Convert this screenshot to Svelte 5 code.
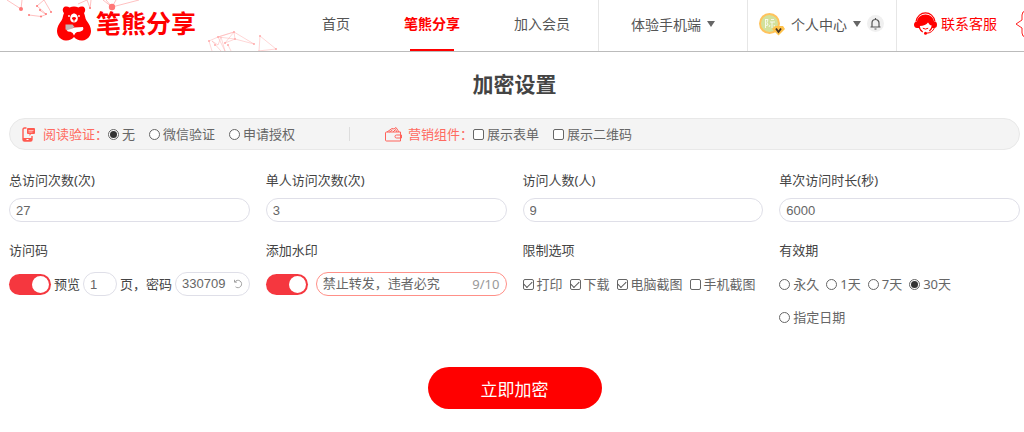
<script>
  let verify = $state('none');
  let widgets = $state({ form: false, qr: false });
  let preview = $state(true);
  let watermark = $state(true);
  let markText = $state('禁止转发，违者必究');
  let expiry = $state('30');

  const verifyOptions = [
    { value: 'none', label: '无' },
    { value: 'wechat', label: '微信验证' },
    { value: 'apply', label: '申请授权' }
  ];
  const expiryOptions = [
    { value: 'forever', label: '永久' },
    { value: '1', label: '1天' },
    { value: '7', label: '7天' },
    { value: '30', label: '30天' },
    { value: 'date', label: '指定日期', ownRow: true }
  ];
  let limits = $state([
    { label: '打印', on: true },
    { label: '下载', on: true },
    { label: '电脑截图', on: true },
    { label: '手机截图', on: false }
  ]);
  let counts = $state([
    { id: 'total', label: '总访问次数(次)', value: '27' },
    { id: 'single', label: '单人访问次数(次)', value: '3' },
    { id: 'people', label: '访问人数(人)', value: '9' },
    { id: 'duration', label: '单次访问时长(秒)', value: '6000' }
  ]);
</script>

<header>
  <svg class="net" width="280" height="51" viewBox="0 0 280 51" aria-hidden="true">
    <g fill="none" stroke="#ffa6a6" stroke-width=".7">
      <path d="M7 0 21 9 22 0M29 15l12 1.500 5-2-6-4M44 0l-7 6 9 8M44 0l7 12M78 4l9-4 3 8M103 0l9 7 27-7M106 0l6 7 4-7M91 0l-1 9" />
      <path stroke-opacity=".65" d="M209 41l9-4 16-5 20 12-19-5-10 4 9-11 1 7-17-2 7 14-4-14-3 8-6-4 9 10M209 41l3 10M228 45l3 6M234 32l-16 5M260 36l-1 15M260 36l16 13-18 2" />
    </g>
    <g fill="#ff7777">
      <circle cx="21" cy="9" r="2" /><circle cx="112" cy="7" r="3.200" />
      <circle cx="29" cy="15" r="1" /><circle cx="41" cy="16.500" r="1" /><circle cx="46" cy="14" r="1" />
      <circle cx="37" cy="6" r="1" /><circle cx="51" cy="12" r="1" /><circle cx="90" cy="8" r="1" /><circle cx="40" cy="10" r="1" />
    </g>
    <g fill="#ffabab">
      <circle cx="209" cy="41" r="1" /><circle cx="218" cy="37" r="1" /><circle cx="234" cy="32" r="1" />
      <circle cx="254" cy="44" r="1" /><circle cx="235" cy="39" r="1" /><circle cx="225" cy="43" r="1" />
      <circle cx="215" cy="45" r="1" /><circle cx="228" cy="45" r="1" /><circle cx="260" cy="36" r="1" /><circle cx="276" cy="49" r="1" />
    </g>
  </svg>

  <a class="brand" href="#home">
    <svg width="36" height="36" viewBox="0 0 36 36" aria-hidden="true">
      <path fill="#f00" d="M8 8C6 6 6.500 2 9.500 1.500c1.500-.3 3 .2 4 1 3-1.200 6-1.200 9 0 1-.8 2.500-1.300 4-1C29.500 2 30 6 28 8c1.200 2.500 1 5 2.500 7.500C33 19 35 22 35 26c0 5-3.500 9-8.500 9.500-3.500.3-6.500-1-8.500-3.500-2 2.500-5 3.800-8.500 3.500C4.500 35 1 31 1 26c0-4 2-7 4.500-10.500C7 13 6.800 10.500 8 8z" />
      <circle cx="13" cy="11" r=".9" fill="#fff" /><circle cx="23" cy="11" r=".9" fill="#fff" />
      <path fill="#fff" d="M18 8.500c2.200 0 3.800 2.300 3.800 5s-1.600 4-3.800 4-3.800-1.300-3.800-4 1.600-5 3.800-5z" />
      <path fill="#f00" d="M15.800 13q2.200-1.800 4.400 0-.2 1.500-1.700 2v1.500h-1V15q-1.500-.5-1.700-2z" />
      <path fill="#c4b4b4" d="M9.500 19.500h7l2 2.500-6 3.500-3-1z" />
      <path fill="#fff" d="M10.500 25.500l8-3 8.500-.5q1 2-.5 3.500-2.500 1.500-5.500 1.500-2 .8-3 3.500-1-3-3.500-3.800-2.500.2-4-1.200z" />
    </svg>
    <span>笔熊分享</span>
  </a>

  <nav>
    <a href="#index">首页</a>
    <a href="#share" class="active">笔熊分享</a>
    <a href="#member">加入会员</a>
  </nav>

  <button class="cell mobile">体验手机端<i class="caret"></i></button>

  <div class="cell account">
    <span class="avatar">
      <svg width="26" height="24" viewBox="0 0 26 24" aria-hidden="true">
        <circle cx="10.500" cy="11.500" r="9.500" fill="#d3e19c" stroke="#ffc35c" stroke-width="2" />
        <path d="M6.500 7v9M6.500 7.500h2.500l-1 3 1 2.500-2 .5M12 7.500h3M11 10h5M13 10v6M11 13l-1 2M15 13l1 2" fill="none" stroke="#fff" stroke-opacity=".8" />
        <path d="M16 14h8l2 3-6.500 6.500L13 17z" fill="#ffc24b" />
        <path d="M17 16.500l2.500 3.500 2.500-3.500" fill="none" stroke="#432" stroke-width="1.800" />
      </svg>
    </span>
    <button class="plain">个人中心<i class="caret"></i></button>
    <button class="bell" aria-label="消息">
      <svg width="17" height="17" viewBox="0 0 17 17" aria-hidden="true">
        <path d="M3.500 12h10M5 12V8a3.500 3.500 0 0 1 7 0v4M8.500 4.500V3M7.500 14h2" fill="none" stroke="#555" stroke-width="1.200" />
      </svg>
    </button>
  </div>

  <a class="cell contact" href="#service">
    <svg width="23" height="23" viewBox="0 0 23 23" aria-hidden="true">
      <path d="M2 9.500C3 4 7 .8 11.500 .8S20 4 21 9.500" fill="none" stroke="#f00" stroke-width="1.200" />
      <path fill="#f00" d="M11.500 2.500C7 2.500 3.500 5.500 3 9.500q-3 .3-3 3.200T3 16h1.800q1 2.800 3.700 4.500l.5-1Q6 17.500 5.800 14c3.700 0 6.700-1.200 8.200-3.500q1.200 2.500 3.700 3-.3 3.300-2.700 5l.5 1q2-1.300 2.900-3.500H20q3 0 3-3.300t-3-3.200c-.5-4-4-7-8.500-7z" />
      <path d="M8.800 16.200q2.700 1.800 5.400 0" fill="none" stroke="#f00" />
      <circle cx="11.500" cy="21.200" r="1.500" fill="#f00" />
      <path d="M20.500 15.500q-2 5.500-8 5.700" fill="none" stroke="#f00" />
    </svg>
    <span>联系客服</span>
    <svg class="bubble" width="24" height="28" viewBox="0 0 24 28" aria-hidden="true">
      <path d="M24 1H11Q7 1 7 5v5l-6 4 6 4v5q0 4 4 4h13" fill="#fff" stroke="#f22" />
    </svg>
  </a>
</header>

<main>
  <h1>加密设置</h1>

  <div class="bar">
    <svg class="phone" width="13" height="15" viewBox="0 0 13 15" aria-hidden="true">
      <path d="M4.500 1H2.500Q1 1 1 2.500v10Q1 14 2.500 14h6q1.500 0 1.500-1.500V9" fill="none" stroke="#ff5a50" stroke-width="1.400" />
      <path d="M1 11h9v3H1zM6 1h6q1 0 1 1v4q0 1-1 1H9L7.500 9V7H6Q5 7 5 6V2q0-1 1-1z" fill="#ff5a50" />
      <path d="M6.500 3.500h5M6.500 5h4" stroke="#fff" stroke-width=".6" />
      <path d="M4.500 12.500h2" stroke="#fff" />
    </svg>
    <span class="topic">阅读验证：</span>
    <div class="choices" role="radiogroup" aria-label="阅读验证">
      {#each verifyOptions as o}
        <label><input type="radio" name="verify" value={o.value} bind:group={verify} />{o.label}</label>
      {/each}
    </div>
    <i class="divider"></i>
    <svg class="wallet" width="17" height="15" viewBox="0 0 17 15" aria-hidden="true">
      <path d="M1.500 5h14v9h-14q-1 0-1-1V6q0-1 1-1zM2 5l5-3.500 2 .5 2-1.500 3 4.500M4.500 5l3-2M8 5l2.500-2.500L12 5M16.500 8h-5a1.500 1.500 0 0 0 0 3h5z" fill="none" stroke="#ff625a" />
    </svg>
    <span class="topic">营销组件：</span>
    <div class="choices">
      <label><input type="checkbox" bind:checked={widgets.form} />展示表单</label>
      <label><input type="checkbox" bind:checked={widgets.qr} />展示二维码</label>
    </div>
  </div>

  <div class="grid">
    {#each counts as c}
      <div class="field">
        <label class="name" for={c.id}>{c.label}</label>
        <input class="text" id={c.id} type="text" bind:value={c.value} />
      </div>
    {/each}

    <div class="field">
      <div class="name">访问码</div>
      <div class="row">
        <input class="switch" type="checkbox" role="switch" aria-label="访问码" bind:checked={preview} />
        <label for="pages">预览</label>
        <input class="text pages" id="pages" type="text" value="1" />
        <label for="code">页，密码</label>
        <div class="text box">
          <input id="code" type="text" value="330709" />
          <button class="plain refresh" aria-label="刷新密码">
            <svg width="10" height="10" viewBox="0 0 10 10" aria-hidden="true">
              <path d="M1.500 .8v2.400h2.400M1.800 3A3.700 3.700 0 1 1 2.500 7.800" fill="none" stroke="#999" stroke-width=".9" />
            </svg>
          </button>
        </div>
      </div>
    </div>

    <div class="field">
      <div class="name">添加水印</div>
      <div class="row wide">
        <input class="switch" type="checkbox" role="switch" aria-label="添加水印" bind:checked={watermark} />
        <div class="text box warn">
          <input type="text" maxlength="10" aria-label="水印文字" bind:value={markText} />
          <span class="count">{markText.length}/10</span>
        </div>
      </div>
    </div>

    <div class="field">
      <div class="name">限制选项</div>
      <div class="row options">
        {#each limits as l}
          <label><input type="checkbox" bind:checked={l.on} />{l.label}</label>
        {/each}
      </div>
    </div>

    <div class="field">
      <div class="name">有效期</div>
      <div class="row options" role="radiogroup" aria-label="有效期">
        {#each expiryOptions as o}
          <label class:own={o.ownRow}><input type="radio" name="expiry" value={o.value} bind:group={expiry} />{o.label}</label>
        {/each}
      </div>
    </div>
  </div>

  <button class="submit">立即加密</button>
</main>

<style>
  :global(body) {
    margin: 0;
    background: #fff;
    overflow-x: hidden;
  }
  header, main, input, button {
    font-family: "Noto Sans", "Noto Sans CJK SC", sans-serif;
  }
  header, main, header *, main * {
    box-sizing: border-box;
  }
  a {
    color: inherit;
    text-decoration: none;
  }
  button {
    border: 0;
    padding: 0;
    background: none;
    color: inherit;
    font-size: 14px;
    cursor: pointer;
  }
  svg {
    display: block;
    flex: none;
  }

  header {
    position: relative;
    display: flex;
    height: 52px;
    border-bottom: 1px solid #bbb;
    font-size: 14px;
    line-height: 20px;
    color: #555;
    overflow: hidden;
    white-space: nowrap;
  }
  .net {
    position: absolute;
    left: 0;
    top: 0;
  }
  .brand {
    position: relative;
    flex: 1;
    display: flex;
    align-items: center;
    gap: 4px;
    padding: 0 0 6px 56px;
    color: #f00;
    font-size: 25px;
    font-weight: 700;
  }
  nav {
    display: flex;
    padding-right: 1px;
  }
  nav a {
    position: relative;
    display: flex;
    align-items: center;
    padding: 0 27px 4px;
  }
  nav .active {
    color: #f00;
    font-weight: 700;
  }
  nav .active::after {
    content: "";
    position: absolute;
    left: 50%;
    bottom: 0;
    width: 44px;
    height: 2px;
    margin-left: -22px;
    background: #f00;
  }
  .cell {
    display: flex;
    align-items: center;
    padding-bottom: 4px;
    border-left: 1px solid #e6e6e6;
  }
  .mobile {
    padding-left: 32px;
    padding-right: 32px;
  }
  .plain {
    display: flex;
    align-items: center;
  }
  .caret {
    margin-left: 6px;
    border: solid transparent;
    border-width: 6px 4px 0;
    border-top-color: #666;
  }
  .account {
    padding-left: 11px;
    padding-right: 12px;
    gap: 6px;
  }
  .bell {
    border-radius: 50%;
    background: #f0f0f0;
  }
  .contact {
    gap: 4px;
    padding-left: 17px;
    width: 128px;
    color: #f00;
  }
  .bubble {
    margin-left: 14px;
  }

  main {
    padding: 16px 4px 24px 9px;
    font-size: 13px;
    line-height: 20px;
    color: #666;
  }
  h1 {
    margin: 0 0 18px;
    text-align: center;
    font-size: 21px;
    line-height: 32px;
    color: #444;
  }
  .bar {
    display: flex;
    align-items: center;
    height: 32px;
    padding: 0 12px;
    border: 1px solid #e8e8e8;
    border-radius: 16px;
    background: #f4f4f4;
    white-space: nowrap;
  }
  .topic {
    color: #ff6a60;
  }
  .phone {
    margin-right: 8px;
  }
  .wallet {
    margin-right: 6px;
  }
  .choices {
    display: flex;
    gap: 14px;
  }
  .divider {
    width: 1px;
    height: 14px;
    margin: 0 35px 0 54px;
    background: #ddd;
  }
  .choices label, .options label {
    display: flex;
    align-items: center;
    gap: 3px;
  }
  input {
    margin: 0;
  }
  input[type="radio"], input[type="checkbox"] {
    appearance: none;
    flex: none;
    display: grid;
    place-items: center;
    width: 11px;
    height: 11px;
    border: 1px solid #666;
    border-radius: 2px;
    background: #fff;
  }
  input[type="radio"] {
    border-radius: 50%;
  }
  input[type="radio"]:checked::before {
    content: "";
    width: 7px;
    height: 7px;
    border-radius: 50%;
    background: #333;
  }
  .choices input[type="checkbox"]:checked::before,
  .options input[type="checkbox"]:checked::before {
    content: "";
    width: 7px;
    height: 4px;
    margin-bottom: 2px;
    border: solid #555;
    border-width: 0 0 1px 1px;
    rotate: -45deg;
  }

  .grid {
    display: grid;
    grid-template-columns: repeat(4, minmax(0, 1fr));
    gap: 18px 16px;
    margin-top: 20px;
    white-space: nowrap;
  }
  .name {
    display: block;
    color: #444;
  }
  .text {
    width: 100%;
    height: 24px;
    margin-top: 8px;
    padding: 0 6px;
    border: 1px solid #dfdfe8;
    border-radius: 12px;
    background: #fff;
    color: #666;
    font-family: "Liberation Sans", "Noto Sans CJK SC", sans-serif;
    font-size: 13px;
  }
  .row {
    display: flex;
    align-items: center;
    gap: 3px;
    min-height: 24px;
    margin-top: 12px;
    color: #444;
  }
  .row .text {
    margin-top: 0;
  }
  .row.wide {
    gap: 8px;
  }
  .row .pages {
    flex: none;
    width: 34px;
  }
  .box {
    flex: 1;
    min-width: 0;
    display: flex;
    align-items: center;
  }
  .box input {
    flex: 1;
    min-width: 0;
    width: 0;
    padding: 0;
    border: 0;
    outline: 0;
    background: none;
    color: inherit;
    font: inherit;
  }
  .warn {
    border-color: #ff9088;
  }
  .count {
    color: #999;
    font-family: "Noto Sans", sans-serif;
  }
  .row .switch {
    display: block;
    width: 42px;
    height: 21px;
    padding: 2px;
    border: 0;
    border-radius: 11px;
    background: #ccc;
  }
  .row .switch::before {
    content: "";
    display: block;
    width: 17px;
    height: 17px;
    border-radius: 50%;
    background: #fff;
  }
  .row .switch:checked {
    background: #f5373f;
  }
  .row .switch:checked::before {
    margin-left: 21px;
  }
  .options {
    flex-wrap: wrap;
    gap: 9px 7px;
    color: #666;
  }
  .options label {
    height: 24px;
  }
  .options .own {
    flex-basis: 100%;
  }
  .submit {
    display: block;
    width: 174px;
    height: 42px;
    margin: 38px auto 0;
    border-radius: 21px;
    background: #f00;
    color: #fff;
    font-size: 17px;
  }
</style>
